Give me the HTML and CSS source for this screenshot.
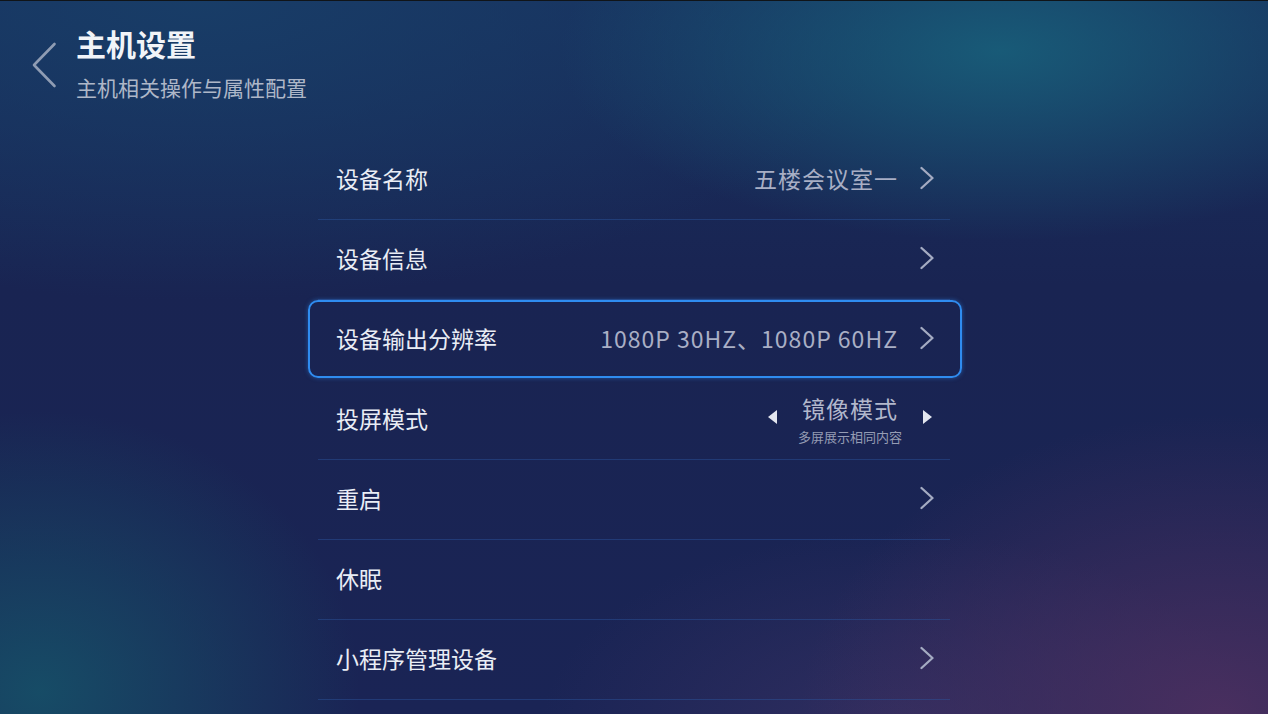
FILE: index.html
```html
<!DOCTYPE html>
<html lang="zh-CN">

<head>
    <meta charset="UTF-8">
    <meta name="viewport" content="width=device-width, initial-scale=1.0">
    <title>主机设置</title>
    <link rel="stylesheet" href="styles.css">
</head>

<body>
    <div class="screen">
        <header class="page-header">
            <a href="#" class="back-button">
                <svg width="26" height="46" viewBox="0 0 26 46">
                    <polyline points="23.5,2 3,23 23.5,44" fill="none" stroke="#8f9cb3" stroke-width="2.6" stroke-linecap="round" stroke-linejoin="round" />
                </svg>
            </a>
            <div class="titles">
                <h1>主机设置</h1>
                <p class="subtitle">主机相关操作与属性配置</p>
            </div>
        </header>

        <ul class="settings-list">
            <li class="setting-row">
                <span class="label">设备名称</span>
                <span class="value">五楼会议室一</span>
                <svg class="chevron" width="14" height="24" viewBox="0 0 14 24">
                    <polyline points="1.5,2 12.5,12 1.5,22" />
                </svg>
            </li>
            <li class="setting-row">
                <span class="label">设备信息</span>
                <svg class="chevron" width="14" height="24" viewBox="0 0 14 24">
                    <polyline points="1.5,2 12.5,12 1.5,22" />
                </svg>
            </li>
            <li class="setting-row focused">
                <span class="label">设备输出分辨率</span>
                <span class="value">1080P 30HZ、1080P 60HZ</span>
                <svg class="chevron" width="14" height="24" viewBox="0 0 14 24">
                    <polyline points="1.5,2 12.5,12 1.5,22" />
                </svg>
            </li>
            <li class="setting-row">
                <span class="label">投屏模式</span>
                <div class="switcher">
                    <span class="arrow arrow-left"></span>
                    <div class="mode">
                        <span class="mode-name">镜像模式</span>
                        <span class="mode-desc">多屏展示相同内容</span>
                    </div>
                    <span class="arrow arrow-right"></span>
                </div>
            </li>
            <li class="setting-row">
                <span class="label">重启</span>
                <svg class="chevron" width="14" height="24" viewBox="0 0 14 24">
                    <polyline points="1.5,2 12.5,12 1.5,22" />
                </svg>
            </li>
            <li class="setting-row">
                <span class="label">休眠</span>
            </li>
            <li class="setting-row">
                <span class="label">小程序管理设备</span>
                <svg class="chevron" width="14" height="24" viewBox="0 0 14 24">
                    <polyline points="1.5,2 12.5,12 1.5,22" />
                </svg>
            </li>
        </ul>
    </div>
</body>

</html>
```

FILE: styles.css
```css
html,
body {
    margin: 0;
    height: 100%;
}

body {
    font-family: "Noto Sans CJK SC", "Noto Sans", sans-serif;
    color: #e9edf5;
    overflow: hidden;
}

.screen {
    height: 714px;
    box-sizing: border-box;
    border-top: 1px solid #101418;
    background:
        radial-gradient(ellipse 440px 190px at 1000px 50px, rgba(24, 98, 124, 0.85), rgba(24, 98, 124, 0) 100%),
        radial-gradient(ellipse 320px 280px at 40px 690px, rgba(22, 80, 104, 0.9), rgba(22, 80, 104, 0) 100%),
        radial-gradient(ellipse 420px 300px at 1220px 714px, rgba(78, 48, 96, 0.9), rgba(78, 48, 96, 0) 100%),
        radial-gradient(ellipse 360px 200px at 900px 730px, rgba(58, 50, 100, 0.7), rgba(58, 50, 100, 0) 100%),
        radial-gradient(ellipse 700px 300px at 200px 0px, rgba(24, 62, 104, 0.9), rgba(24, 62, 104, 0) 100%),
        linear-gradient(180deg, #18305e 0%, #192452 40%, #1a2455 100%);
}

.page-header {
    display: flex;
    align-items: flex-start;
    gap: 19px;
    padding: 22px 0 0 31px;
}

.back-button {
    display: flex;
    margin-top: 19px;
}

.titles h1 {
    margin: 0;
    font-size: 30px;
    line-height: 40px;
    font-weight: 700;
    color: #f2f4f8;
}

.subtitle {
    margin: 9px 0 0;
    font-size: 21px;
    line-height: 30px;
    color: #aeb7c8;
}

.settings-list {
    list-style: none;
    width: 632px;
    margin: 38px auto 0;
    padding: 0;
}

.setting-row {
    position: relative;
    display: flex;
    align-items: center;
    height: 80px;
    box-sizing: border-box;
    padding: 0 16px 4px 18px;
    border-bottom: 1px solid rgba(44, 86, 160, 0.45);
    font-size: 23px;
}

.setting-row .label {
    flex: 1;
    color: #e9edf5;
}

.value {
    color: #a9afc5;
    letter-spacing: 1px;
    margin-right: 22px;
}

.chevron {
    fill: none;
    stroke: #a4abc2;
    stroke-width: 2.3;
    stroke-linecap: round;
    stroke-linejoin: round;
}

.focused {
    border-bottom-color: transparent;
}

.focused::before {
    content: "";
    position: absolute;
    top: 0;
    bottom: 1px;
    left: -10px;
    right: -12px;
    border: 2px solid #2f8cf0;
    border-radius: 10px;
    box-shadow: 0 0 4px rgba(47, 140, 240, 0.5);
}

.switcher {
    display: flex;
    align-items: center;
    gap: 21px;
    margin: 5px 2px 0 0;
}

.mode {
    display: flex;
    flex-direction: column;
    align-items: center;
}

.mode-name {
    font-size: 23px;
    line-height: 28px;
    color: #b2b8cc;
    letter-spacing: 1px;
}

.mode-desc {
    font-size: 13px;
    line-height: 18px;
    margin-top: 6px;
    color: #959cb4;
}

.arrow {
    width: 0;
    height: 0;
    border-top: 7px solid transparent;
    border-bottom: 7px solid transparent;
    margin-top: -6px;
}

.arrow-left {
    border-right: 9px solid #e3e6ef;
}

.arrow-right {
    border-left: 9px solid #e3e6ef;
}
```
